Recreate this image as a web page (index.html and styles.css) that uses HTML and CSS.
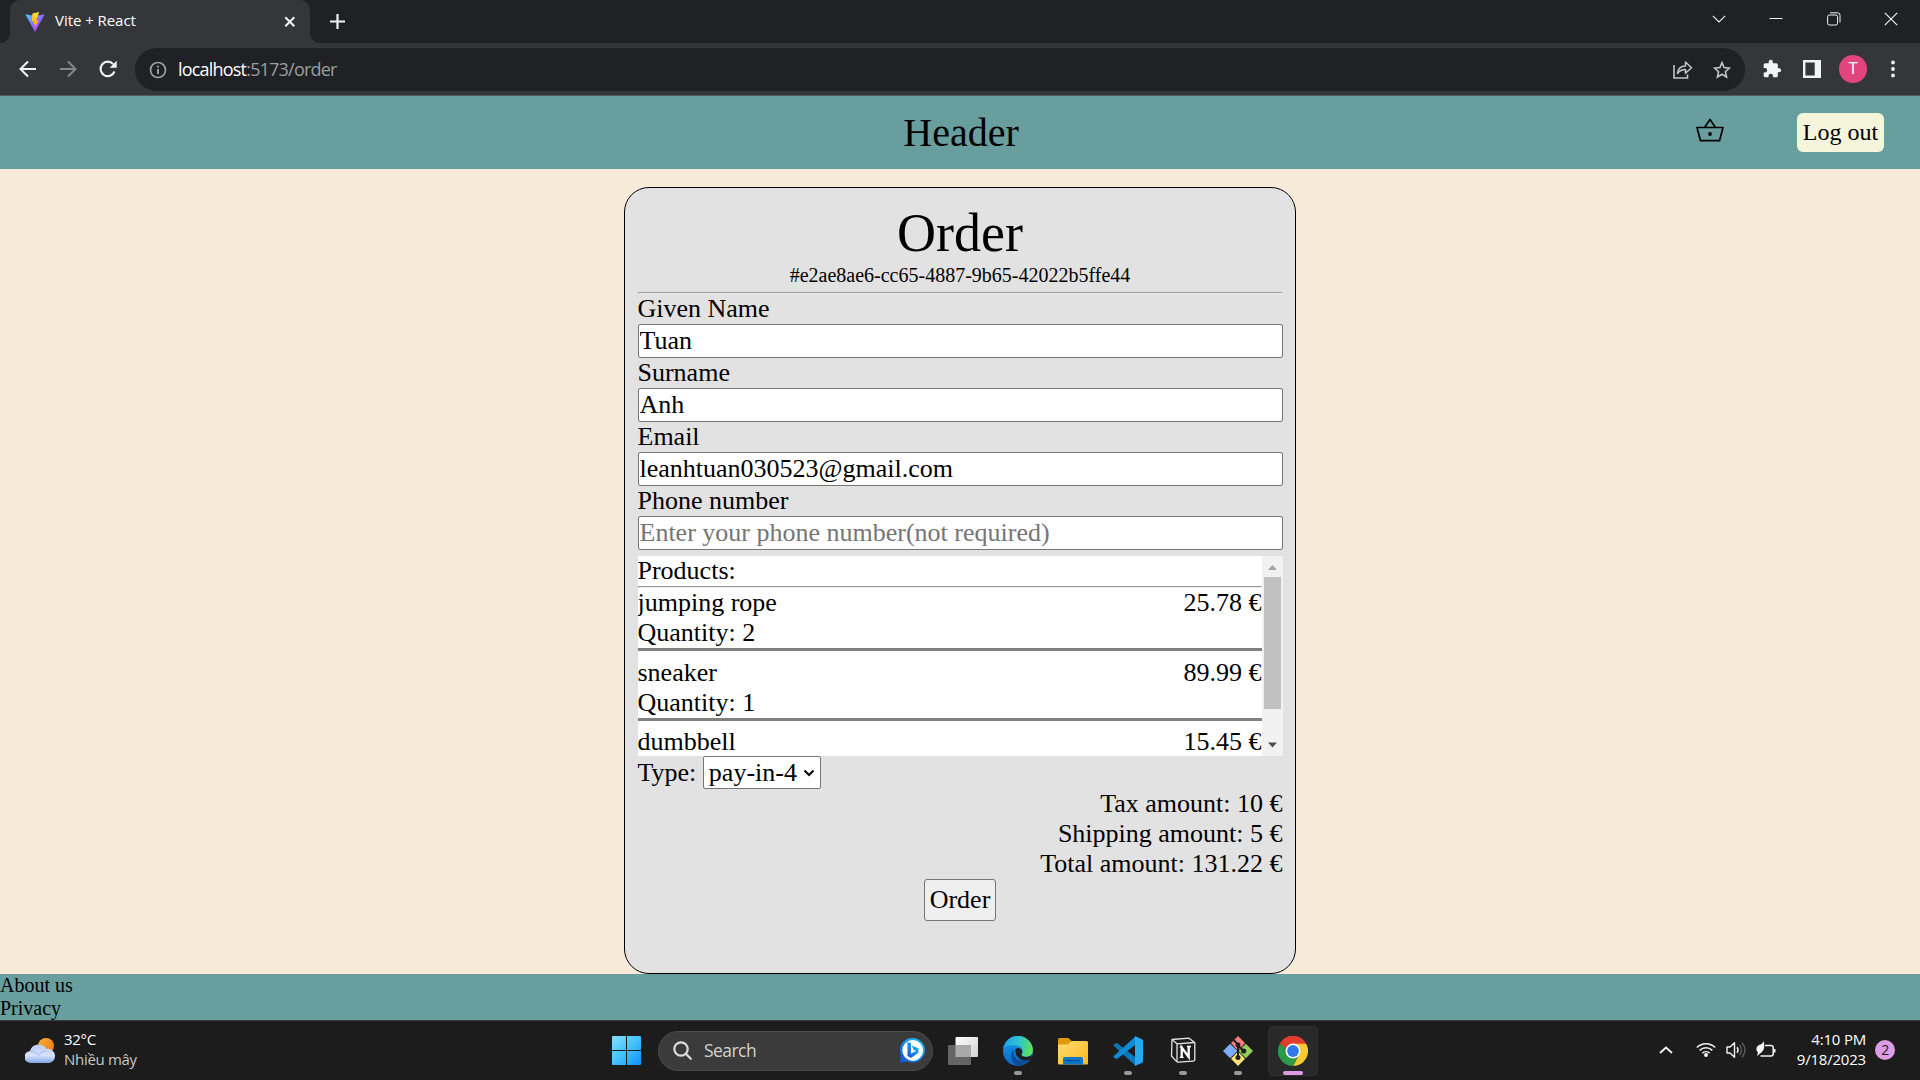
FILE: index.html
```html
<!DOCTYPE html>
<html lang="en">
<head>
<meta charset="utf-8">
<title>Vite + React</title>
<link rel="stylesheet" href="styles.css">
</head>
<body>
<div class="tabstrip">
  <div class="tab">
    <svg class="favicon" width="20" height="20" viewBox="0 0 20 20">
      <defs>
        <linearGradient id="va" x1="0" y1="0" x2="1" y2="1"><stop offset="0" stop-color="#41d1ff"/><stop offset=".6" stop-color="#9a5cff"/><stop offset="1" stop-color="#bd34fe"/></linearGradient>
        <linearGradient id="vb" x1="0" y1="0" x2="0" y2="1"><stop offset="0" stop-color="#ffdd35"/><stop offset="1" stop-color="#ffa800"/></linearGradient>
      </defs>
      <path d="M.3 2.2 10 20 19.8 2.2 10 4z" fill="url(#va)"/>
      <path d="M14.2.1 7.4 1.4 6.8 9.6l2.3-.4-.7 3.3 1.9-.5-1 4.6 4.3-8.2-2.5.4z" fill="url(#vb)"/>
    </svg>
    <span class="tab-title">Vite + React</span>
    <svg width="12" height="12" viewBox="0 0 12 12" class="stroke"><path d="M1.3 1.3l9 9m0-9l-9 9" stroke-width="2"/></svg>
  </div>
  <svg class="newtab stroke" width="16" height="16" viewBox="0 0 16 16"><path d="M7.500 0v15M0 7.500h15" stroke-width="2.200"/></svg>
  <div class="window-buttons">
    <svg width="14" height="14" viewBox="0 0 14 14" class="stroke"><path d="M.8 3.800 7 10l6.200-6.200" stroke-width="1.100"/></svg>
    <svg width="14" height="14" viewBox="0 0 14 14" class="stroke"><path d="M.5 6.500h13" stroke-width="1"/></svg>
    <svg width="14" height="14" viewBox="0 0 14 14" class="stroke"><rect x=".6" y="3" width="10" height="10" rx="1.800"/><path d="M3 .8h7.500a2.500 2.500 0 0 1 2.500 2.500V10.500"/></svg>
    <svg width="14" height="14" viewBox="0 0 14 14" class="stroke"><path d="M.8.8l12.400 12.400m0-12.400L.8 13.200" stroke-width="1.200"/></svg>
  </div>
</div>
<div class="toolbar">
  <div class="nav">
    <svg width="18" height="18" viewBox="0 0 18 18" class="stroke"><path d="M17 9H2M9 1.500 1.500 9 9 16.500" stroke-width="2"/></svg>
    <svg width="18" height="18" viewBox="0 0 18 18" class="stroke dim"><path d="M1 9h15M9 1.500 16.500 9 9 16.500" stroke-width="2"/></svg>
    <svg width="18" height="18" viewBox="0 0 18 18" class="stroke"><path d="M15.500 11.500a7.200 7.200 0 1 1-1.300-7.400" stroke-width="2.100"/><path d="M17.700.8v7h-7z" fill="#f1f3f4" stroke="none"/></svg>
  </div>
  <div class="omnibox">
    <svg width="18" height="18" viewBox="0 0 18 18" class="stroke info"><circle cx="9" cy="9" r="7.500" stroke-width="1.700"/><path d="M9 8v5M9 4.800v1.800" stroke-width="1.900"/></svg>
    <span class="url">localhost<span class="path">:5173/order</span></span>
    <svg class="stroke soft share" width="20" height="20" viewBox="0 0 20 20"><path d="M1 5v13h13.500v-3.500" stroke-width="1.600"/><path d="M4.500 13.500C5 8.500 8 6 12.500 6V2l6 5.800-6 5.500V9.500c-3.500 0-5.800 1-8 4z" stroke-width="1.500" stroke-linejoin="round"/></svg>
    <svg class="stroke soft" width="18" height="18" viewBox="0 0 18 18"><path d="M9 1.600l2.100 5 5.400.5-4.100 3.600 1.200 5.300L9 13.200 4.400 16l1.200-5.300-4.100-3.600 5.400-.5z" stroke-width="1.600"/></svg>
  </div>
  <div class="extensions">
    <svg width="20" height="20" viewBox="0 0 24 24" fill="#f1f3f4"><path d="M20.500 11H19V7a2 2 0 0 0-2-2h-4V3.500a2.500 2.500 0 0 0-5 0V5H4a2 2 0 0 0-2 2v3.800h1.500a2.700 2.700 0 0 1 0 5.400H2V20a2 2 0 0 0 2 2h3.800v-1.500a2.700 2.700 0 0 1 5.400 0V22H17a2 2 0 0 0 2-2v-4h1.500a2.500 2.500 0 0 0 0-5z"/></svg>
    <svg width="18" height="18" viewBox="0 0 18 18"><path fill="#f1f3f4" fill-rule="evenodd" d="M0 0h18v18H0zM2.400 2.400v13.200h9.300V2.400z"/></svg>
    <span class="avatar">T</span>
    <svg width="18" height="18" viewBox="0 0 18 18" fill="#f1f3f4"><circle cx="9" cy="2.500" r="1.900"/><circle cx="9" cy="9" r="1.900"/><circle cx="9" cy="15.500" r="1.900"/></svg>
  </div>
</div>

<header class="header">
  <h1>Header</h1>
  <div class="actions">
    <svg width="28" height="24" viewBox="0 0 28 24" fill="none" stroke="#000" stroke-width="1.700" stroke-linejoin="round"><path d="M1 9.500h26l-3.500 13.200h-19zM8.500 9.500 14 1.500l5.500 8"/><circle cx="14" cy="16" r="1.900" fill="#000" stroke="none"/></svg>
    <button class="logout">Log out</button>
  </div>
</header>

<main class="main">
  <form class="card">
    <h2>Order</h2>
    <p class="order-id">#e2ae8ae6-cc65-4887-9b65-42022b5ffe44</p>
    <hr>
    <label for="given">Given Name</label>
    <input id="given" type="text" value="Tuan">
    <label for="surname">Surname</label>
    <input id="surname" type="text" value="Anh">
    <label for="email">Email</label>
    <input id="email" type="text" value="leanhtuan030523@gmail.com">
    <label for="phone">Phone number</label>
    <input id="phone" type="text" placeholder="Enter your phone number(not required)">
    <div class="products">
      <div class="list">
        <p>Products:</p>
        <hr>
        <div class="item"><div class="row"><span>jumping rope</span><span>25.78 €</span></div><p>Quantity: 2</p></div>
        <div class="item"><div class="row"><span>sneaker</span><span>89.99 €</span></div><p>Quantity: 1</p></div>
        <div class="item"><div class="row"><span>dumbbell</span><span>15.45 €</span></div></div>
      </div>
      <div class="scrollbar">
        <svg width="21" height="21" viewBox="0 0 21 21"><path d="M6 14l4.500-5 4.500 5z" fill="#a3a3a3"/></svg>
        <div class="thumb"></div>
        <svg class="down" width="21" height="21" viewBox="0 0 21 21"><path d="M6 7.500l4.500 5 4.500-5z" fill="#505050"/></svg>
      </div>
    </div>
    <div class="type">
      <span>Type:</span>
      <div class="select">pay-in-4<svg width="12" height="8" viewBox="0 0 12 8"><path d="M1.500 1.500 6 6l4.500-4.500" fill="none" stroke="#000" stroke-width="2"/></svg></div>
    </div>
    <div class="totals">
      <p>Tax amount: 10 €</p>
      <p>Shipping amount: 5 €</p>
      <p>Total amount: 131.22 €</p>
    </div>
    <button class="submit" type="button">Order</button>
  </form>
</main>
<footer class="footer"><p>About us</p><p>Privacy</p></footer>

<div class="taskbar">
  <div class="weather">
    <svg width="30" height="26" viewBox="0 0 30 26">
      <defs>
        <linearGradient id="sun" x1="0" y1="0" x2="1" y2="1"><stop offset="0" stop-color="#f9b233"/><stop offset="1" stop-color="#ee7410"/></linearGradient>
        <linearGradient id="cl" x1="0" y1="0" x2="0" y2="1"><stop offset="0" stop-color="#b9d0fa"/><stop offset=".6" stop-color="#d5e2fb"/><stop offset="1" stop-color="#82a5e6"/></linearGradient>
      </defs>
      <circle cx="21" cy="8" r="8" fill="url(#sun)"/>
      <path d="M6 25a6 6 0 0 1-1-12 9 9 0 0 1 16.500-2A7 7 0 0 1 30 18a7 7 0 0 1-6 7z" fill="url(#cl)"/>
      <path d="M5.500 13.500c4-.5 7 1.500 8 4 1.500-3 4-4.500 8-4.500" fill="none" stroke="#90afe9" opacity=".7"/>
    </svg>
    <div class="weather-text"><span>32°C</span><span class="muted">Nhiều mây</span></div>
  </div>
  <svg class="start" width="29" height="29" viewBox="0 0 29 29">
    <defs><linearGradient id="win" x1="0" y1="0" x2="1" y2="1"><stop offset="0" stop-color="#82deff"/><stop offset=".5" stop-color="#43c2fc"/><stop offset="1" stop-color="#0b91f7"/></linearGradient></defs>
    <path d="M1 0h13v14H0V1q0-1 1-1zM15 0h13q1 0 1 1v13H15zM0 15h14v14H1q-1 0-1-1zM15 15h14v13q0 1-1 1H15z" fill="url(#win)"/>
  </svg>
  <div class="search">
    <svg width="19" height="19" viewBox="0 0 19 19" fill="none" stroke="#ddd" stroke-width="2.200"><circle cx="8" cy="8" r="6.700"/><path d="M12.800 12.800l5 5" stroke-linecap="round"/></svg>
    <span>Search</span>
    <svg width="25" height="25" viewBox="0 0 25 25">
      <defs><linearGradient id="bi" x1="1" y1="0" x2="0" y2="1"><stop offset="0" stop-color="#24c6ee"/><stop offset=".6" stop-color="#1680e4"/><stop offset="1" stop-color="#1650d0"/></linearGradient></defs>
      <path d="M12.500 0a12.300 12.300 0 1 1-5 23.500L0 25l.8-8A12.300 12.300 0 0 1 12.500 0z" fill="url(#bi)"/>
      <circle cx="12.700" cy="12.500" r="10.400" fill="#fff"/>
      <path d="M7.500 4l3.500 1.300v10.400l5-2.800-2.500-1.200-1.600-3.900 6.600 2.400v4.600L11 19.900l-3.500-2z" fill="url(#bi)"/>
    </svg>
  </div>
  <div class="apps">
    <div class="app">
      <svg width="30" height="30" viewBox="0 0 30 30"><defs><linearGradient id="tv" x1="0" y1="0" x2="1" y2="1"><stop offset="0" stop-color="#fff"/><stop offset="1" stop-color="#d2d2d2"/></linearGradient></defs><rect x="7.500" y="1" width="22.500" height="20" rx="1" fill="url(#tv)"/><rect y="9" width="23" height="20" rx="1" fill="#6d6d6d" opacity=".9"/><path d="M7.500 9H23v12H7.500z" fill="#a9a9a9"/></svg>
    </div>
    <div class="app running">
      <svg width="30" height="30" viewBox="0 0 30 30">
        <defs>
          <linearGradient id="e1" x1="0" y1=".3" x2="1" y2=".5"><stop offset="0" stop-color="#219be8"/><stop offset=".5" stop-color="#2cc4d2"/><stop offset="1" stop-color="#62df55"/></linearGradient>
          <linearGradient id="e2" x1="0" y1="0" x2="0" y2="1"><stop offset="0" stop-color="#1b9be4"/><stop offset="1" stop-color="#0869cc"/></linearGradient>
        </defs>
        <circle cx="15" cy="15" r="15" fill="url(#e2)"/>
        <path d="M.2 12.500A15 15 0 0 1 30 14c0 4.500-3.300 6.700-6.800 6.700-3.700 0-5.600-1.300-4.300-3 2-2.800.2-7.400-5-8.100C8 8.800 3 9.500.2 12.500z" fill="url(#e1)"/>
        <path d="M11.500 12.500c-3 5.500.7 12.300 8.500 12 3 0 5.500-1 7.500-2A15 15 0 0 1 16 30C8.500 29 5.500 18 11.500 12.500z" fill="#104b98"/>
        <path d="M12.500 13.500c1.300-2.300 5.300-2 6.500 1 .6 1.500.2 2.500-.4 3.500-.7 1.400.9 2.900 4.700 2.900 2.600 0 4.700-.8 5.900-2.600.4 1.300-.7 3.700-1.800 5-8 3.500-16-2.300-14.900-9.800z" fill="#1d1d1d"/>
      </svg>
    </div>
    <div class="app">
      <svg width="30" height="30" viewBox="0 0 30 30"><defs><linearGradient id="fo" x1="0" y1="0" x2="1" y2="1"><stop offset="0" stop-color="#ffdc74"/><stop offset="1" stop-color="#f8b91d"/></linearGradient></defs><path d="M0 3.500Q0 2 1.500 2h9l3.500 3.500V10H0z" fill="#de9b05"/><path d="M0 8.500h9.500L14 5h14.500Q30 5 30 6.500V27.500q0 1-1 1H1q-1 0-1-1z" fill="url(#fo)"/><path d="M5 28.500V23q0-2 2-2h16q2 0 2 2v5.500z" fill="#0c77c9"/><path d="M8 24.600h14" stroke="#084f91" stroke-width="1.200"/></svg>
    </div>
    <div class="app running">
      <svg width="30" height="30" viewBox="0 0 30 30"><path d="M1 8.500 2.700 7.200q.8-.5 1.600.1L23 21.700V29.800L21.700 29 .9 10.100q-.8-.8.100-1.600z" fill="#0878ba"/><path d="M1 21.500l1.700 1.300q.8.500 1.600-.1L23 8.300V.2L21.700 1 .9 19.900q-.8.800.1 1.600z" fill="#0c8cd3"/><path d="M22 0l7 3.300q1 .5 1 1.600v20.200q0 1.100-1 1.600L22 30z" fill="#29a8f2"/></svg>
    </div>
    <div class="app running">
      <svg width="26" height="27" viewBox="0 0 26 27"><path d="M2 2.500 19 1.200 24.800 5.500v17q0 1.500-1.500 1.600L8 25.200q-1 0-1.600-.8L1.500 19z" fill="#1d1d1d" stroke="#e4e4e4" stroke-width="1.300" stroke-linejoin="round"/><path d="M2.500 3 7 6.800V24.500M7 6.800l17-1.300" fill="none" stroke="#e4e4e4" stroke-width="1.300"/><path d="M11.700 20V10.500l7 9.500V9.500" fill="none" stroke="#fff" stroke-width="2.300"/><path d="M9.700 10.200h3M9.700 20.300h4M17 9.500h4" fill="none" stroke="#fff" stroke-width="1.300"/></svg>
    </div>
    <div class="app running">
      <svg width="30" height="30" viewBox="0 0 30 30"><path d="M15 0l7 7-7 8-7-8z" fill="#f57f7f"/><path d="M7.200 7.800 14.500 15l-7.300 7.200L0 15z" fill="#7dacf8"/><path d="M22.800 7.800 30 15l-7.200 7.200L15.500 15z" fill="#90cf5f"/><path d="M15 15.500l7 7.200L15 30l-7-7.300z" fill="#ffe27a"/><path d="M10.500 4 15 8.500V22M15 9.500l5.500 5.500" stroke="#1d1d1d" stroke-width="1.900" fill="none"/><g fill="#1d1d1d"><circle cx="15" cy="9" r="2.400"/><circle cx="15" cy="21.500" r="2.500"/><circle cx="20.700" cy="15" r="2.500"/></g></svg>
    </div>
    <div class="app running active">
      <svg width="30" height="30" viewBox="0 0 30 30"><path d="M2 7.500A15 15 0 0 1 28 7.500L21 15 9 18.500z" fill="#e33b2e"/><path d="M28 7.500A15 15 0 0 1 15 30L21.100 18.500 15 8V7.500z" fill="#fcc934"/><path d="M2 7.500A15 15 0 0 0 15 30l6.100-11.500H8.500z" fill="#2c9a47"/><path d="M2 7.500 8.500 18.500 15 8z" fill="#2c9a47"/><path d="M2 7.500A15 15 0 0 1 28 7.500H15a7.500 7.500 0 0 0-6.500 5z" fill="#e33b2e"/><circle cx="15" cy="15" r="7.500" fill="#fff"/><circle cx="15" cy="15" r="5.900" fill="#3079e8"/></svg>
    </div>
  </div>
  <div class="tray">
    <svg width="14" height="8" viewBox="0 0 14 8" class="stroke"><path d="M1 7l6-5.500L13 7" stroke-width="1.800"/></svg>
    <svg class="wifi stroke" width="20" height="15" viewBox="0 0 20 15"><path d="M.8 5.500a13 13 0 0 1 18.400 0M3.700 8.400a9 9 0 0 1 12.600 0M6.400 11.100a5.200 5.200 0 0 1 7.200 0" stroke-width="1.500"/><circle cx="10" cy="13" r="1.900" fill="#fff" stroke="none"/></svg>
    <svg class="volume stroke" width="20" height="18" viewBox="0 0 20 18"><path d="M1 6h3l4.500-4.300v14.600L4 12H1z" stroke-width="1.400" stroke-linejoin="round"/><path d="M11 6.200q2.200 2.800 0 5.600" stroke-width="1.400"/><path d="M13.500 4q4 5 0 10M16 1.800q6 7.200 0 14.400" stroke-width="1.400" stroke="#5b5b5b"/></svg>
    <svg class="battery stroke" width="20" height="17" viewBox="0 0 20 17"><path d="M9 4.500h6q2.200 0 2.200 2.200v6q0 2.300-2.200 2.300H4.500" stroke-width="1.500"/><path d="M18.500 8v3.500" stroke-width="2"/><path d="M7.500 0C9 5 8.500 10.500 4 12.500L1 15l1-3.500C-1.500 8 1.500 4 4.500 3.500 6 3 7 1.500 7.500 0z" fill="#fff" stroke="none"/></svg>
    <div class="clock"><span>4:10 PM</span><span>9/18/2023</span></div>
    <span class="badge">2</span>
  </div>
</div>
</body>
</html>
```
FILE: styles.css
```css
* { box-sizing: border-box; }

body {
  margin: 0;
  width: 1920px;
  height: 1080px;
  overflow: hidden;
  display: flex;
  flex-direction: column;
  background: #f8ead8;
  font-family: "Liberation Serif", "Times New Roman", serif;
  font-size: 26px;
  line-height: 30px;
  color: #000;
}
h1, h2, p { margin: 0; font-weight: 400; }
svg { display: block; flex: none; }
button, input { font: inherit; color: inherit; margin: 0; }
.stroke { fill: none; stroke: #f1f3f4; }
.stroke.dim { stroke: #85868a; }
.stroke.soft { stroke: #c4c5c7; }
.stroke.info { stroke: #9aa0a6; }

.tabstrip, .toolbar, .taskbar {
  display: flex;
  align-items: center;
  flex: none;
  font-family: "Open Sans", "Noto Sans", sans-serif;
  color: #fff;
}

/* Browser tabs */
.tabstrip {
  height: 43px;
  padding-left: 10px;
  background: #202124;
}
.tab {
  position: relative;
  display: flex;
  align-items: center;
  width: 300px;
  height: 43px;
  padding: 0 14px 0 15px;
  border-radius: 10px 10px 0 0;
  background: #35363a;
}
.tab::before, .tab::after {
  content: "";
  position: absolute;
  bottom: 0;
  width: 10px;
  height: 10px;
}
.tab::before { left: -10px; background: radial-gradient(circle at 0 0, #202124 9.500px, #35363a 10.500px); }
.tab::after { right: -10px; background: radial-gradient(circle at 100% 0, #202124 9.500px, #35363a 10.500px); }
.tab-title { flex: 1; margin: 0 0 3px 10px; font-size: 15px; letter-spacing: -0.05px; }
.newtab { margin-left: 20px; }
.window-buttons { display: flex; gap: 43.500px; margin: 0 22px 6px auto; }

/* Address bar */
.toolbar {
  height: 53px;
  border-bottom: 1px solid #55575a;
  background: #35363a;
}
.nav { display: flex; gap: 22px; width: 135px; padding-left: 19px; }
.omnibox {
  display: flex;
  align-items: center;
  width: 1610px;
  height: 43px;
  margin-top: 1px;
  padding: 0 14px;
  border-radius: 22px;
  background: #202124;
}
.url { flex: 1; margin: 0 0 2px 11px; font-size: 18px; letter-spacing: -0.8px; }
.path { color: #9a9da1; }
.share { margin-right: 20px; }
.extensions { display: flex; align-items: center; width: 175px; padding-left: 17px; }
.extensions svg:nth-child(2) { margin-left: 21px; }
.avatar {
  width: 28px;
  height: 28px;
  margin: 0 17px 0 18px;
  border-radius: 50%;
  background: #e2447c;
  font: 16px/28px Roboto, sans-serif;
  text-align: center;
}

/* Page header */
.header {
  display: grid;
  grid-template-columns: 1fr auto 1fr;
  align-items: center;
  height: 73px;
  flex: none;
  padding-right: 36px;
  padding-left: 36px;
  background: #699e9f;
}
.header h1 { grid-column: 2; font-size: 40px; line-height: 46px; margin-left: 2px; }
.actions { display: flex; align-items: center; justify-content: flex-end; gap: 73px; }
.actions svg { margin-bottom: 5px; }
.logout {
  width: 87px;
  height: 39px;
  padding: 0 0 2px;
  border: 0;
  border-radius: 6px;
  background: #f5f5dc;
  font-size: 24px;
}

/* Order form */
.main { flex: 1; display: flex; justify-content: center; padding-top: 18px; }
.card {
  display: flex;
  flex-direction: column;
  width: 672px;
  padding: 14px 12.500px 0;
  border: 1px solid #000;
  border-radius: 25px;
  background: #e2e2e2;
}
.card h2 { font-size: 54px; line-height: 63px; text-align: center; }
.order-id { height: 27px; font-size: 20px; line-height: 20px; text-align: center; }
hr { width: 100%; height: 2px; margin: 0; border: 1px solid; border-color: #9a9a9a #eee #eee #9a9a9a; }
input {
  height: 34px;
  padding: 1px;
  border: 1px solid #767676;
  border-radius: 2px;
  background: #fff;
  outline: 0;
}
input::placeholder { color: #757575; opacity: 1; }
.products { display: flex; height: 200px; margin-top: 6px; overflow: hidden; background: #fff; }
.list { flex: 1; }
.item { border-bottom: 3px solid #808080; margin-bottom: 7px; }
.item + .item + .item { margin-top: -1px; }
.row { display: flex; justify-content: space-between; }
.scrollbar { display: flex; flex-direction: column; align-items: center; width: 21px; background: #f1f1f1; }
.thumb { width: 17px; height: 132px; background: #c1c1c1; }
.down { margin-top: auto; }
.type { display: flex; height: 33px; gap: 6.500px; }
.type span { padding-top: 2px; }
.select {
  display: flex;
  align-items: center;
  justify-content: space-between;
  width: 118px;
  height: 33px;
  padding: 0 5px;
  border: 1px solid #767676;
  border-radius: 2px;
  background: #fff;
  white-space: nowrap;
}
.totals { text-align: right; }
.submit {
  align-self: center;
  width: 72px;
  height: 42px;
  padding: 0;
  border: 1px solid #767676;
  border-radius: 3px;
  background: #efefef;
}
.footer { height: 46px; flex: none; background: #699e9f; font-size: 20px; line-height: 23px; }

/* Desktop taskbar */
.taskbar {
  height: 60px;
  border-top: 1px solid #3b3c3c;
  background: #1c1c1c;
  font-size: 15px;
  line-height: 20px;
  letter-spacing: -0.3px;
}
.weather { display: flex; align-items: center; gap: 9px; width: 612px; padding-left: 25px; }
.weather-text, .clock { display: flex; flex-direction: column; margin-bottom: 4px; }
.muted { color: #c8c8c8; }
.search {
  display: flex;
  align-items: center;
  width: 275px;
  height: 40px;
  margin-left: 17px;
  padding: 0 7px 0 14px;
  border: 1px solid #4c4c4c;
  border-radius: 20px;
  background: #3b3b3b;
  color: #d2d2d2;
  font-size: 17.500px;
}
.search span { flex: 1; margin: 0 0 1px 12px; letter-spacing: -0.55px; }
.apps { display: flex; margin-left: 5px; }
.app {
  position: relative;
  display: flex;
  align-items: center;
  justify-content: center;
  width: 50px;
  height: 50px;
  margin-right: 5px;
  border-radius: 5px;
}
.running::after {
  content: "";
  position: absolute;
  bottom: 1px;
  left: 21px;
  width: 8px;
  height: 4px;
  border-radius: 2px;
  background: #999;
}
.active { background: #292929; box-shadow: inset 0 0 0 1px #303030; }
.active::after { left: 15px; width: 20px; background: #dc9ce3; }
.tray { display: flex; align-items: center; margin-left: auto; padding-right: 25px; }
.tray > svg { margin-bottom: 2px; }
.wifi { margin-left: 23px; }
.volume { margin-left: 10px; }
.battery { margin-left: 10px; }
.clock { width: 90px; text-align: right; letter-spacing: -0.2px; }
.badge {
  width: 20px;
  height: 20px;
  margin: 0 0 1px 9px;
  border-radius: 50%;
  background: #dc9ce3;
  color: #1c1c1c;
  font-size: 14px;
  text-align: center;
}
```
